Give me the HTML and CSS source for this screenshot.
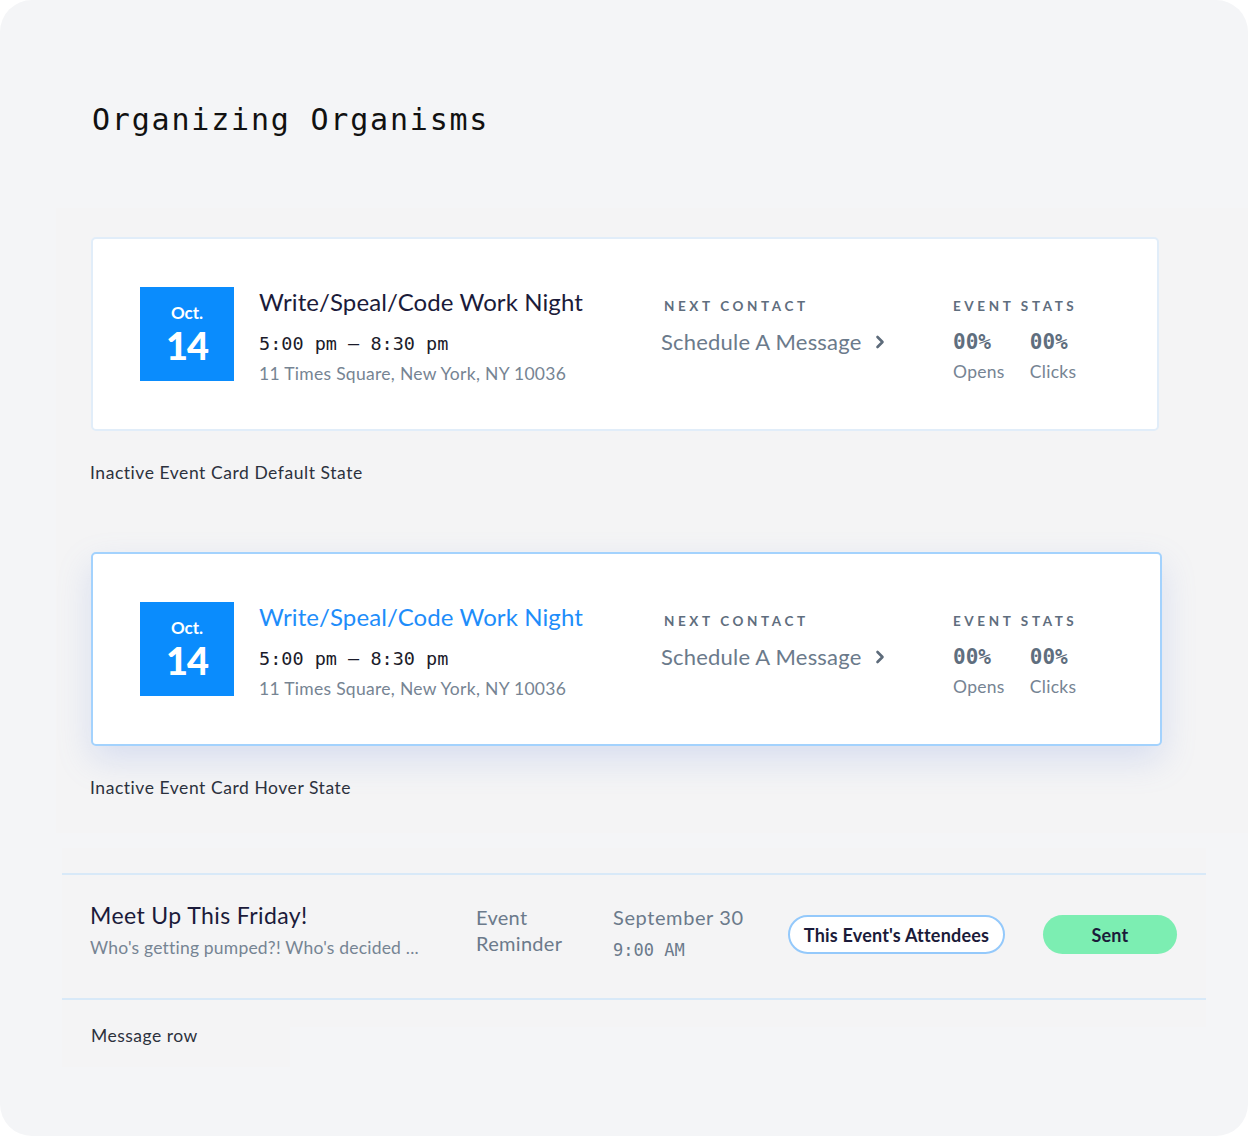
FILE: index.html
```html
<!DOCTYPE html>
<html lang="en">
  <head>
    <meta charset="utf-8" />
    <title>Organizing Organisms</title>
    <link rel="stylesheet" href="styles.css">
  </head>
  <body>
    <div class="frame">
      <h1 class="page-title">Organizing Organisms</h1>

      <section class="board cards">
        <div class="event-card">
          <div class="date-box">
            <span class="month">Oct.</span>
            <span class="day">14</span>
          </div>
          <div class="event-info">
            <div class="event-name">Write/Speal/Code Work Night</div>
            <div class="event-time">5:00 pm – 8:30 pm</div>
            <div class="event-place">11 Times Square, New York, NY 10036</div>
          </div>
          <div class="next-contact">
            <div class="caps">Next Contact</div>
            <a class="schedule">Schedule A Message
              <svg width="10" height="14" viewBox="0 0 10 14"><polyline points="2.5,2 7.5,7 2.5,12" fill="none" stroke="#5d6b7a" stroke-width="2.6" stroke-linecap="round" stroke-linejoin="round"/></svg>
            </a>
          </div>
          <div class="event-stats">
            <div class="caps">Event Stats</div>
            <div class="stats-row">
              <div class="stat"><span class="pct">00%</span><span class="stat-name">Opens</span></div>
              <div class="stat"><span class="pct">00%</span><span class="stat-name">Clicks</span></div>
            </div>
          </div>
        </div>
        <p class="caption">Inactive Event Card Default State</p>

        <div class="event-card hover">
          <div class="date-box">
            <span class="month">Oct.</span>
            <span class="day">14</span>
          </div>
          <div class="event-info">
            <div class="event-name">Write/Speal/Code Work Night</div>
            <div class="event-time">5:00 pm – 8:30 pm</div>
            <div class="event-place">11 Times Square, New York, NY 10036</div>
          </div>
          <div class="next-contact">
            <div class="caps">Next Contact</div>
            <a class="schedule">Schedule A Message
              <svg width="10" height="14" viewBox="0 0 10 14"><polyline points="2.5,2 7.5,7 2.5,12" fill="none" stroke="#5d6b7a" stroke-width="2.6" stroke-linecap="round" stroke-linejoin="round"/></svg>
            </a>
          </div>
          <div class="event-stats">
            <div class="caps">Event Stats</div>
            <div class="stats-row">
              <div class="stat"><span class="pct">00%</span><span class="stat-name">Opens</span></div>
              <div class="stat"><span class="pct">00%</span><span class="stat-name">Clicks</span></div>
            </div>
          </div>
        </div>
        <p class="caption">Inactive Event Card Hover State</p>
      </section>

      <section class="board messages">
        <div class="message-row">
          <div class="msg-main">
            <div class="msg-title">Meet Up This Friday!</div>
            <div class="msg-preview">Who's getting pumped?! Who's decided ...</div>
          </div>
          <div class="msg-type">Event<br>Reminder</div>
          <div class="msg-when">
            <div class="msg-date">September 30</div>
            <div class="msg-hour">9:00 AM</div>
          </div>
          <div class="pill outline">This Event's Attendees</div>
          <div class="pill sent">Sent</div>
        </div>
      </section>
      <div class="board row-caption">Message row</div>
    </div>
  </body>
</html>
```

FILE: styles.css
```css
body {
  margin: 0;
  background: #ffffff;
}

.frame {
  width: 1248px;
  height: 1136px;
  border-radius: 32px;
  background: #f4f5f7;
  overflow: hidden;
  font-family: Lato, "Open Sans", sans-serif;
}

.page-title {
  margin: 0;
  padding: 100px 0 0 92px;
  height: 41px;
  font-family: "DejaVu Sans Mono", monospace;
  font-weight: 400;
  font-size: 30px;
  line-height: 40px;
  letter-spacing: 1.8px;
  color: #111111;
}

.board {
  background: #f4f4f5;
}

.cards {
  margin: 67px 0 0 56px;
  padding: 29px 0 34px 35px;
}

.event-card {
  box-sizing: border-box;
  width: 1068px;
  height: 194px;
  padding: 48px 0 0 47px;
  display: flex;
  align-items: flex-start;
  background: #ffffff;
  border: 2px solid #e1edf9;
  border-radius: 5px;
}

.event-card.hover {
  width: 1071px;
  border-color: #a3d2fd;
  box-shadow: 0 14px 34px rgba(120, 145, 225, 0.22);
}

.event-card.hover .event-name {
  color: #1e8dfa;
}

/* blue calendar tile */
.date-box {
  flex: 0 0 94px;
  height: 94px;
  background: #0a8cfd;
  color: #ffffff;
  display: flex;
  flex-direction: column;
  align-items: center;
  font-weight: 700;
}

.month {
  margin-top: 16px;
  font-size: 17px;
  line-height: 19px;
}

.day {
  font-size: 38px;
  line-height: 46px;
  font-weight: 900;
  letter-spacing: -1px;
}

.event-info {
  flex: 0 0 402px;
  margin-left: 25px;
}

.event-name {
  font-size: 24px;
  line-height: 30px;
  letter-spacing: 0.1px;
  color: #1b1b3a;
}

.event-time {
  margin-top: 14px;
  font-family: "DejaVu Sans Mono", monospace;
  font-size: 18.5px;
  line-height: 26px;
  color: #1b1b2a;
}

.event-place {
  margin-top: 6px;
  font-size: 17.5px;
  line-height: 22px;
  letter-spacing: 0.3px;
  color: #768493;
}

.next-contact {
  flex: 0 0 292px;
}

.caps {
  margin-top: 11px;
  padding-left: 3px;
  font-size: 13.5px;
  line-height: 16px;
  font-weight: 700;
  letter-spacing: 3.6px;
  text-transform: uppercase;
  color: #5f6e7e;
}

.schedule {
  display: flex;
  align-items: center;
  gap: 13px;
  margin-top: 15px;
  font-size: 22px;
  line-height: 26px;
  letter-spacing: 0.2px;
  color: #6b7a8b;
}

.event-stats .caps {
  padding-left: 0;
}

.stats-row {
  display: flex;
  gap: 25px;
  margin-top: 15px;
}

.stat {
  display: flex;
  flex-direction: column;
}

.pct {
  font-family: "DejaVu Sans Mono", monospace;
  font-weight: 700;
  font-size: 21px;
  line-height: 26px;
  color: #5f6e7e;
}

.stat-name {
  margin-top: 6px;
  font-size: 17.5px;
  line-height: 22px;
  letter-spacing: 0.3px;
  color: #768493;
}

.caption {
  margin: 31px 0 68px -1px;
  font-size: 17.5px;
  line-height: 22px;
  letter-spacing: 0.55px;
  color: #2c313d;
}

.cards .caption:last-child {
  margin-bottom: 0;
}

.messages {
  margin: 15px 0 0 62px;
  width: 1144px;
  padding: 25px 0 27px;
}

.message-row {
  box-sizing: border-box;
  height: 127px;
  display: flex;
  align-items: flex-start;
  padding-left: 28px;
  border-top: 2px solid #d8e9f8;
  border-bottom: 2px solid #d8e9f8;
}

.msg-main {
  flex: 0 0 386px;
  margin-top: 26px;
}

.msg-title {
  font-size: 23px;
  line-height: 28px;
  letter-spacing: 0.4px;
  color: #1b1b3a;
}

.msg-preview {
  margin-top: 8px;
  font-size: 17.5px;
  line-height: 22px;
  letter-spacing: 0.2px;
  color: #768493;
}

.msg-type {
  flex: 0 0 137px;
  margin-top: 29px;
  font-size: 20px;
  line-height: 26px;
  letter-spacing: 0.3px;
  color: #6b7a8b;
}

.msg-when {
  flex: 0 0 175px;
  margin-top: 29px;
}

.msg-date {
  font-size: 20px;
  line-height: 26px;
  letter-spacing: 0.6px;
  color: #6b7a8b;
}

.msg-hour {
  margin-top: 10px;
  font-family: "DejaVu Sans Mono", monospace;
  font-size: 17px;
  line-height: 20px;
  color: #6b7a8b;
}

.pill {
  box-sizing: border-box;
  height: 39px;
  border-radius: 20px;
  display: flex;
  align-items: center;
  justify-content: center;
  font-size: 18px;
  font-weight: 700;
  letter-spacing: 0.2px;
  color: #1b1b3a;
  margin-top: 40px;
}

.pill.outline {
  width: 217px;
  background: #ffffff;
  border: 2px solid #94c9fb;
}

.pill.sent {
  width: 134px;
  margin-left: 38px;
  background: #7ceeb2;
}

.row-caption {
  width: 199px;
  height: 40px;
  margin-left: 62px;
  padding-left: 29px;
  font-size: 17.5px;
  line-height: 18px;
  letter-spacing: 0.5px;
  color: #2c313d;
}
```
